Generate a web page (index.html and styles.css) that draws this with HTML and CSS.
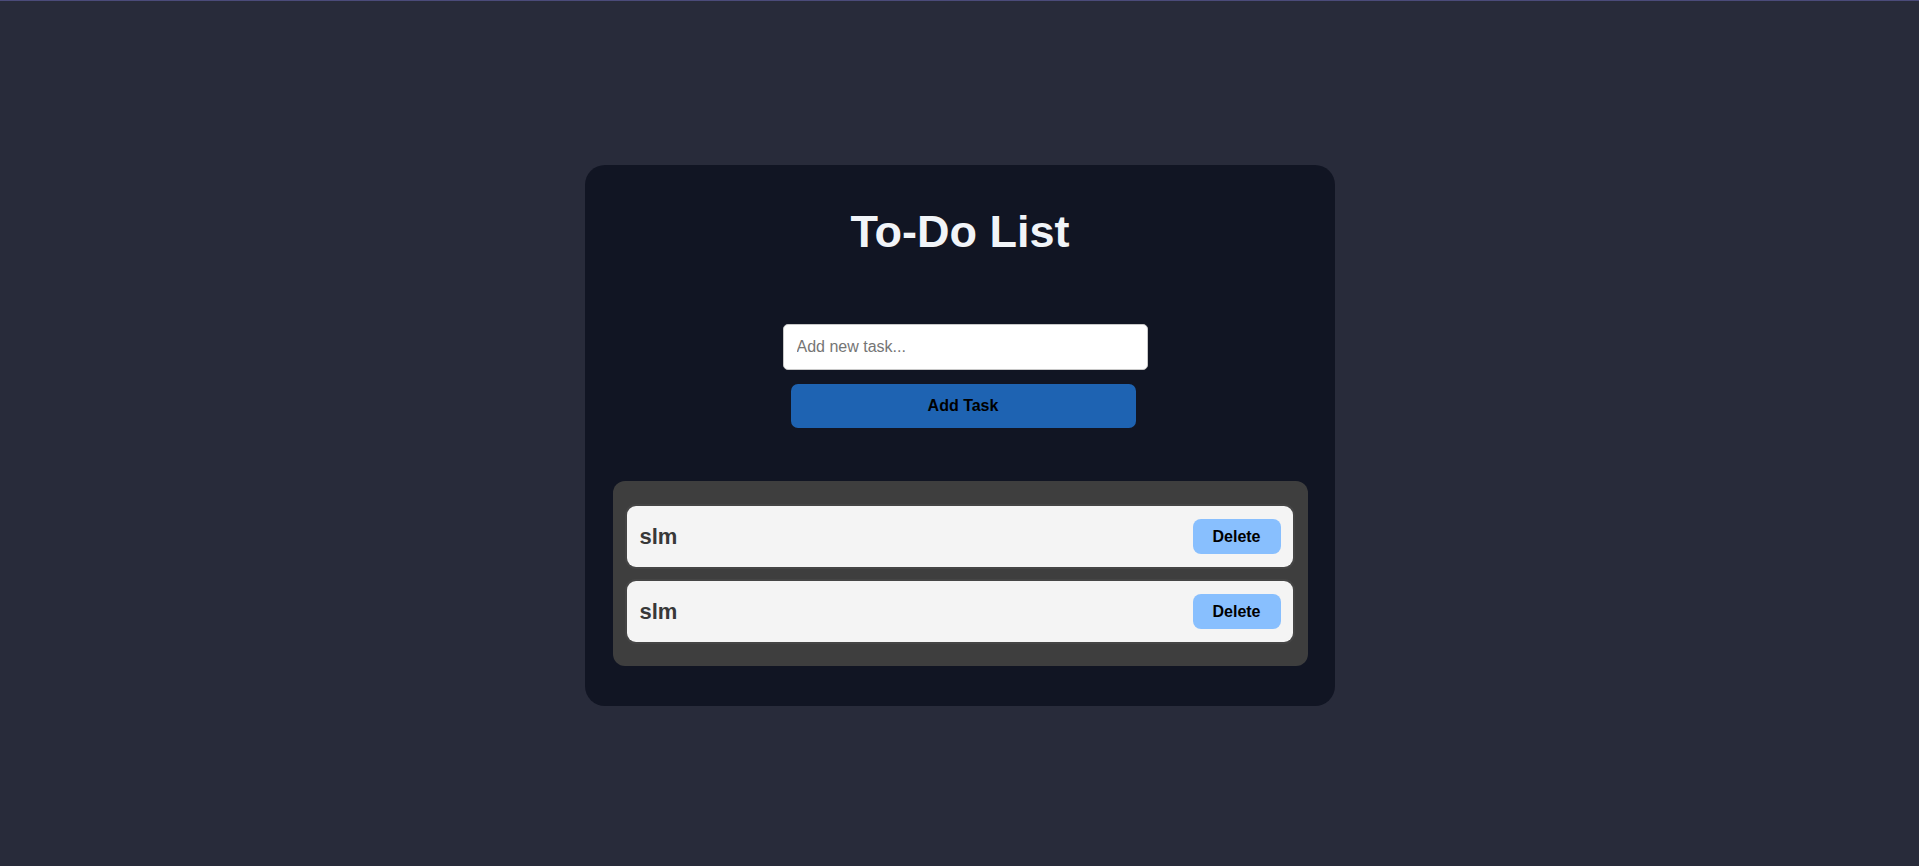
FILE: index.html
```html
<!DOCTYPE html>
<html lang="en">
<head>
<meta charset="utf-8">
<title>To-Do List</title>
<link rel="stylesheet" href="styles.css">
</head>
<body>
  <main class="card">
    <h1 class="title">To-Do List</h1>
    <form class="task-form">
      <input class="task-input" type="text" placeholder="Add new task...">
      <button class="add-btn" type="button">Add Task</button>
    </form>
    <ul class="task-list">
      <li class="task-item"><span class="task-text">slm</span><button class="delete-btn" type="button">Delete</button></li>
      <li class="task-item"><span class="task-text">slm</span><button class="delete-btn" type="button">Delete</button></li>
    </ul>
  </main>
</body>
</html>
```
FILE: styles.css
```css
* { box-sizing: border-box; }

html, body { height: 100%; }

body {
  margin: 0;
  background: #282b3a;
  border-top: 1px solid #4b4b7a;
  font-family: "Liberation Sans", Arial, sans-serif;
  padding-top: 164px;
}

.card {
  width: 750px;
  margin: 0 auto;
  background: #111523;
  border-radius: 20px;
  padding: 42px 27px 40px 28px;
  display: flex;
  flex-direction: column;
}

.title {
  margin: 0;
  text-align: center;
  font-size: 45px;
  font-weight: bold;
  line-height: 49px;
  color: #f1f4f8;
}

.task-form {
  margin: 68px 0 0 170px;
  display: flex;
  flex-direction: column;
  align-items: flex-start;
}

.task-input {
  width: 365px;
  height: 46px;
  padding: 0 13px;
  font-family: "Liberation Sans", Arial, sans-serif;
  font-size: 16px;
  color: #222;
  background: #fff;
  border: 1px solid #c8c8c8;
  border-radius: 5px;
  outline: none;
}

.task-input::placeholder { color: #757575; }

.add-btn {
  margin: 14px 0 0 8px;
  width: 345px;
  height: 44px;
  border: none;
  border-radius: 7px;
  background: #1e63b2;
  color: #000;
  font-family: "Liberation Sans", Arial, sans-serif;
  font-size: 16px;
  font-weight: bold;
}

.task-list {
  list-style: none;
  margin: 53px 0 0;
  padding: 25px 15px 24px 14px;
  background: #3e3e3e;
  border-radius: 12px;
  display: flex;
  flex-direction: column;
  gap: 14px;
}

.task-item {
  height: 61px;
  display: flex;
  align-items: center;
  justify-content: space-between;
  padding: 0 12px 0 13px;
  background: #f4f4f4;
  border-radius: 9px;
  box-shadow: 0 0 0 2px rgba(255, 255, 255, 0.04);
}

.task-text {
  font-size: 22px;
  font-weight: bold;
  color: #383838;
}

.delete-btn {
  width: 88px;
  height: 35px;
  border: none;
  border-radius: 8px;
  background: #88bffe;
  color: #000;
  font-family: "Liberation Sans", Arial, sans-serif;
  font-size: 16px;
  font-weight: bold;
}
```
